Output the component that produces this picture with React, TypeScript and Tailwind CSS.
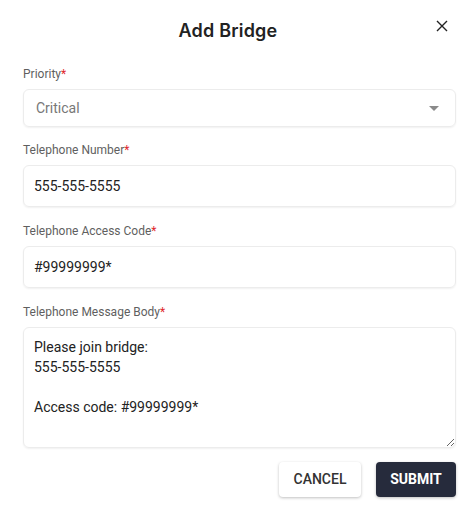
import React from 'react';

const Label = ({ children }: { children: React.ReactNode }) => (
  <label className="block text-[12px] leading-[14px] text-[#5f5f5f] mb-[8px]">
    {children}
    <span className="text-[#e0262c]">*</span>
  </label>
);

export default function App() {
  return (
    <div className="w-[474px] h-[517px] bg-white font-['Roboto',sans-serif] relative">
      <div className="flex items-center justify-center pt-[19px] h-[42px]">
        <h2 className="font-['Inter',sans-serif] text-[18px] font-semibold text-[#222] tracking-[0.2px] ml-[-18px]">
          Add Bridge
        </h2>
      </div>
      <button className="absolute top-[20px] right-[26px] text-[#222]">
        <svg width="12" height="12" viewBox="0 0 12 12" stroke="currentColor" strokeWidth="1.4">
          <path d="M1 1L11 11M11 1L1 11" />
        </svg>
      </button>

      <div className="pl-[23px] pr-[18px] pt-[25px]">
        <div>
          <Label>Priority</Label>
          <div className="flex items-center justify-between h-[38px] rounded-[6px] border border-[#ececec] shadow-[0_1px_2px_rgba(0,0,0,0.06)] pl-[12px] pr-[16px]">
            <span className="text-[14px] text-[#777]">Critical</span>
            <svg width="10" height="5" viewBox="0 0 10 5">
              <path d="M0 0L10 0L5 5Z" fill="#8a8a8a" />
            </svg>
          </div>
        </div>

        <div className="mt-[16px]">
          <Label>Telephone Number</Label>
          <div className="flex items-center h-[42px] rounded-[6px] border border-[#ececec] shadow-[0_1px_2px_rgba(0,0,0,0.06)] px-[10px]">
            <span className="text-[14px] text-[#222]">555-555-5555</span>
          </div>
        </div>

        <div className="mt-[17px]">
          <Label>Telephone Access Code</Label>
          <div className="flex items-center h-[42px] rounded-[6px] border border-[#ececec] shadow-[0_1px_2px_rgba(0,0,0,0.06)] px-[10px]">
            <span className="text-[14px] text-[#222]">#99999999*</span>
          </div>
        </div>

        <div className="mt-[17px]">
          <Label>Telephone Message Body</Label>
          <textarea
            readOnly
            className="block w-full h-[121px] resize-y rounded-[6px] border border-[#ececec] shadow-[0_1px_2px_rgba(0,0,0,0.06)] px-[10px] pt-[9px] text-[14px] leading-[20px] text-[#222] outline-none"
            defaultValue={'Please join bridge:\n555-555-5555\n\nAccess code: #99999999*'}
          />
        </div>

        <div className="flex justify-end gap-[15px] mt-[14px]">
          <button className="w-[82px] h-[35px] rounded-[4px] bg-white text-[14px] font-medium text-[#333] shadow-[0_1px_3px_rgba(0,0,0,0.25)]">
            CANCEL
          </button>
          <button className="w-[80px] h-[35px] rounded-[4px] bg-[#262b3c] text-[14px] font-bold text-white shadow-[0_1px_3px_rgba(0,0,0,0.25)]">
            SUBMIT
          </button>
        </div>
      </div>
    </div>
  );
}
